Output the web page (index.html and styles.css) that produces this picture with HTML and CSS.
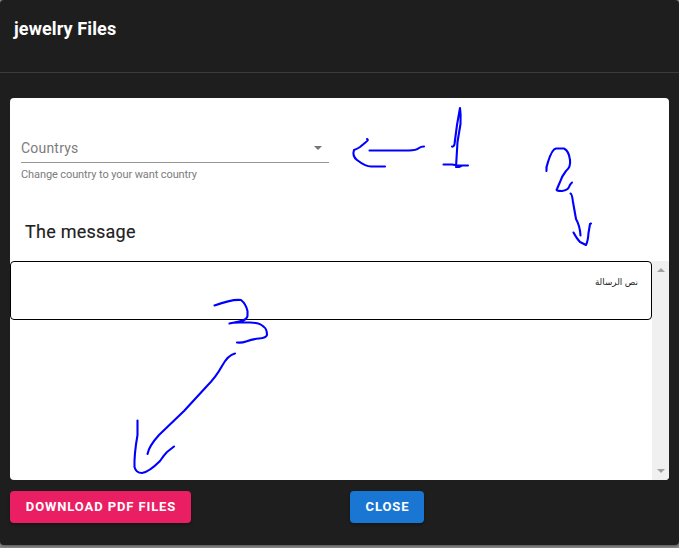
FILE: index.html
```html
<!DOCTYPE html>
<html lang="en">
<head>
<meta charset="utf-8">
<title>jewelry Files</title>
<link rel="stylesheet" href="styles.css">
</head>
<body>
<main class="dialog">
  <header class="dialog-title">jewelry Files</header>
  <section class="card">
    <div class="select">
      <div class="select-slot">
        <span>Countrys</span>
        <svg class="caret" width="8" height="4" viewBox="0 0 8 4"><path d="M0 0h8L4 4z"/></svg>
      </div>
      <div class="hint">Change country to your want country</div>
    </div>
    <h2 class="card-heading">The message</h2>
    <div class="scroller">
      <div class="message" dir="rtl" lang="ar">نص الرسالة</div>
      <div class="scrollbar">
        <svg width="8" height="4" viewBox="0 0 8 4"><path d="M0 4h8L4 0z"/></svg>
        <svg width="8" height="4" viewBox="0 0 8 4"><path d="M0 0h8L4 4z"/></svg>
      </div>
    </div>
  </section>
  <footer class="actions">
    <div class="action"><button class="btn btn-pink">Download PDF Files</button></div>
    <div class="action"><button class="btn btn-blue">Close</button></div>
  </footer>
</main>
<svg class="ink" width="679" height="548" viewBox="0 0 679 548">
  <path d="M367 139Q369 140 366 142L360 147Q357 149 354 150Q352 156 357 160Q366 167 372 166.500H385M369.500 150.500H409Q416 150.500 419 148Q421 146.500 424 146.500"/>
  <path d="M452 146.500Q454 147 454.500 144L457 125L460 108Q461 115 460.500 124L457.500 142L456 167H459L462 165.500M443.500 164.500H452L458 165.500H468"/>
  <path d="M546.500 171Q546 167 548 162Q552 149 556 148.500H564Q569 151 570 160Q571 167 566 171Q562 176 560 182L557 189Q555 191 562 191Q568 190 569 187Q570 184 572 182.500"/>
  <path d="M570.500 193.500Q572 194 573 202L576 219Q580 226 580.500 235.500M573.500 232.500Q577 239 580 242L586 245Q588 241 588.500 233L590 224L591 223.500"/>
  <path d="M214.500 305.500Q232 299 241 300Q246 304 247.500 311V316Q247 320 239 321.500L229.500 323.500Q233 322.500 240 322.500H250Q260 322.500 264 327Q267 329 267 335Q266 338 259 338.500Q253 339 246 341.500Q242 343 237 342.500"/>
  <path d="M235 353.500Q228 355 222 366Q216 377 207 386L184 411L159 435Q149 446 147.500 454M137.500 420.500V435Q134 455 134.500 467Q136 473 142 473Q149 472 160 461Q164 455 167 452L174 446.500"/>
</svg>
</body>
</html>
```

FILE: styles.css
```css
* { box-sizing: border-box; }
body {
  margin: 0;
  height: 548px;
  overflow: hidden;
  background: #8b898a;
  font-family: Roboto, "Liberation Sans", sans-serif;
}
.dialog {
  height: 545px;
  background: #1e1e1e;
  border-radius: 4px;
  box-shadow: 0 1px 3px rgba(0, 0, 0, .4);
}
.dialog-title {
  height: 73px;
  padding: 18px 14px 0;
  border-bottom: 1px solid #3b3b3b;
  color: #fff;
  font-size: 18px;
  font-weight: 700;
  line-height: 22px;
  letter-spacing: .12px;
}
.card {
  height: 382px;
  margin: 25px 10px 0;
  overflow: hidden;
  background: #fff;
  border-radius: 4px;
  display: flex;
  flex-direction: column;
}
.select {
  width: 308px;
  margin: 37px 0 0 11px;
  color: #7c7c7c;
}
.select-slot {
  display: flex;
  align-items: center;
  justify-content: space-between;
  height: 28px;
  padding: 0 7px 1px 0;
  border-bottom: 1px solid #949494;
  font-size: 14px;
  letter-spacing: .2px;
}
.caret { fill: #757575; }
.hint {
  margin-top: 5px;
  font-size: 11px;
  line-height: 14px;
  letter-spacing: -.1px;
}
.card-heading {
  margin: 38px 0 18px 15px;
  color: #212121;
  font-size: 18px;
  font-weight: 400;
  line-height: 23px;
  letter-spacing: .25px;
  -webkit-text-stroke: .15px #212121;
}
.scroller { flex: 1; display: flex; align-items: flex-start; }
.message {
  flex: 1;
  height: 59px;
  padding: 13px 13px;
  border: 1px solid #000;
  border-radius: 4px;
  color: #222;
  font-family: "Liberation Sans", "DejaVu Sans", sans-serif;
  font-size: 8.8px;
  line-height: 14px;
}
.scrollbar {
  width: 17px;
  align-self: stretch;
  display: flex;
  flex-direction: column;
  align-items: center;
  justify-content: space-between;
  padding: 7px 0;
  background: #f0f0f0;
  fill: #a0a0a0;
}
.actions { display: flex; padding: 11px 10px; }
.action { flex: 0 0 340px; }
.action:last-child { flex: 1; }
.btn {
  height: 32px;
  padding: 0 0 0 1px;
  border: 0;
  border-radius: 4px;
  color: #fff;
  font: 700 13px/32px Roboto, "Liberation Sans", sans-serif;
  letter-spacing: .89px;
  text-transform: uppercase;
  white-space: nowrap;
  box-shadow: 0 2px 3px rgba(0, 0, 0, .3);
}
.btn-pink { width: 181px; background: #e91e63; }
.btn-blue { width: 74px; background: #1976d2; }
.ink {
  position: absolute;
  inset: 0;
  pointer-events: none;
  fill: none;
  stroke: #00f;
  stroke-width: 2.1;
  stroke-linecap: round;
  stroke-linejoin: round;
}
```
